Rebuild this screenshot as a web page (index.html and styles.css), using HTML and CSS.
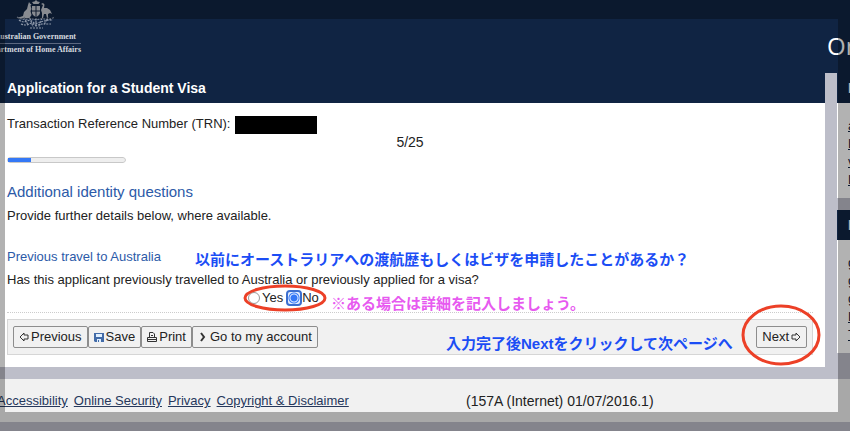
FILE: index.html
```html
<!DOCTYPE html>
<html lang="en">
<head>
<meta charset="utf-8">
<title>Application for a Student Visa</title>
<link rel="stylesheet" href="styles.css">
</head>
<body>
<header class="masthead">
  <div class="brand">
    <svg class="crest" viewBox="0 0 40 29" aria-hidden="true">
      <g fill="#c3c8d0">
        <path d="M20 0l1.500 1.500L24 2l-1.500 2H17.500L16 2l2.500-.5z"/>
        <path d="M13 2l1 1.500 1.500 1-1 1 1 3.500-1 2 1 4-2 3H9l-4 .5-4-.5 6-2 1-4 3-3 1-4z"/>
        <path d="M25 4l2-1 1.500 1.500L28 8l3 0 3 2 2 4-2-1-2 1v4h-1l-1-4-2 0-1 4h-1v-5l-1-3 2-5z"/>
        <path d="M16 6h8v6.500c0 2-2 3.500-4 4.500-2-1-4-2.500-4-4.500z"/>
      </g>
      <path d="M20 6v11M16 11h8" stroke="#142440" stroke-width="1"/>
      <g fill="none" stroke="#8d97a8" stroke-width="1.200" stroke-dasharray="2 1">
        <path d="M1 17q5 3 10 2t9 1q5-2 9-1t10-2M3 20q4 3 8 1t8 3q5-2 9-3t9-1M5 24q5 2 8 0t7 2q4-2 7-2t8 0M14 28h13"/>
        <path d="M8 17l4 8M14 18l3 9M20 18v9M26 18l-3 9M32 17l-4 8"/>
      </g>
    </svg>
    <span class="brand-top">Australian Government</span>
    <span class="brand-bottom">Department of Home Affairs</span>
  </div>
  <span class="site-name">On</span>
</header>
<div class="columns">
  <main class="main">
    <h1 class="title">Application for a Student Visa</h1>
    <div class="content">
      <p class="trn">Transaction Reference Number (TRN): <span class="redacted"></span></p>
      <p class="step">5/25</p>
      <progress class="progress" value="5" max="25" aria-label="Step 5 of 25"></progress>
      <h2 class="section">Additional identity questions</h2>
      <p class="line">Provide further details below, where available.</p>
      <h3 class="subsection">Previous travel to Australia
        <span class="note note-question" lang="ja">以前にオーストラリアへの渡航歴もしくはビザを申請したことがあるか？</span></h3>
      <fieldset class="question">
        <legend>Has this applicant previously travelled to Australia or previously applied for a visa?</legend>
        <div class="answers">
          <label class="choice"><input type="radio" name="travel">Yes</label>
          <label class="choice"><input type="radio" name="travel" checked>No</label>
          <svg class="ring ring-answer" viewBox="0 0 84 28" aria-hidden="true"><ellipse cx="42" cy="14" rx="40" ry="12"/></svg>
          <span class="note note-hint" lang="ja">※ある場合は詳細を記入しましょう。</span>
        </div>
      </fieldset>
      <div class="toolbar">
        <button type="button"><svg class="icon" viewBox="0 0 10 10"><path d="M1 5l4-4v2h4v4H5v2z"/></svg>Previous</button>
        <button type="button"><svg class="icon save" viewBox="0 0 10 10"><path class="disk" d="M0 1h10v9H1L0 9z"/><path class="paper" d="M2 2h6v3H2zM3 7h4v3H3z"/><path class="disk" d="M4 8h1v2H4z"/></svg>Save</button>
        <button type="button"><svg class="icon" viewBox="0 0 10 10"><path d="M2.500 5.500v-5h3.500l1.500 1.500v3.500M.5 5.500h9v4h-9zM.5 7.500h9M4 3.500h2"/></svg>Print</button>
        <button type="button"><svg class="icon bold" viewBox="0 0 10 10"><path d="M3 1l3 4-3 4"/></svg>Go to my account</button>
        <span class="note note-next" lang="ja">入力完了後Nextをクリックして次ページへ</span>
        <span class="next">
          <button type="button">Next<svg class="icon" viewBox="0 0 10 10"><path d="M9 5L5 1v2H1v4h4v2z"/></svg></button>
          <svg class="ring ring-next" viewBox="0 0 80 62" aria-hidden="true"><ellipse cx="40" cy="31" rx="38" ry="29"/></svg>
        </span>
      </div>
    </div>
  </main>
  <aside class="side">
    <h2 class="side-title">R</h2>
    <div class="side-box"><a href="#">a</a><a href="#">L</a><a href="#">v</a><a href="#">L</a></div>
    <h2 class="side-title">H</h2>
    <div class="side-box tall"><a href="#">g</a><a href="#">g</a><a href="#">g</a><a href="#">L</a><a href="#">T</a></div>
  </aside>
</div>
<footer class="footer">
  <nav class="links"><a href="#">Accessibility</a><a href="#">Online Security</a><a href="#">Privacy</a><a href="#">Copyright &amp; Disclaimer</a></nav>
  <span class="version">(157A (Internet) 01/07/2016.1)</span>
</footer>
<div class="shade"></div>
</body>
</html>
```
FILE: styles.css
```css
* { box-sizing: border-box; }
html { height: 100%; }
body {
  position: relative;
  min-height: 100%;
  margin: 0;
  overflow: hidden;
  background: #bdbec9;
  color: #222;
  font: 13px/20px "Liberation Sans", "Noto Sans CJK JP", sans-serif;
}
h1, h2, h3, p { margin: 0; }
.masthead {
  display: flex;
  justify-content: space-between;
  height: 73px;
  background: #102443;
  color: #fff;
}
.brand {
  display: flex;
  flex-direction: column;
  width: 81px;
  font: bold 8px/12px "Liberation Serif", serif;
  white-space: nowrap;
  color: #d5d9df;
}
.crest { width: 40px; height: 29px; margin: 0 0 2px 16px; }
.brand-top { align-self: flex-end; padding-right: 5px; }
.brand-bottom { align-self: flex-end; border-top: 1px solid #5c6880; }
.site-name {
  width: 23px;
  padding-top: 32px;
  font: 24px/28px "Open Sans", sans-serif;
}
.columns { display: flex; gap: 12px; }
.main { flex: 1; background: #fff; }
.title {
  padding: 5px 7px;
  background: #102443;
  color: #fff;
  font-size: 14px;
  line-height: 20px;
}
.content { padding: 11px 12px 12px 7px; }
.redacted {
  display: inline-block;
  width: 82px;
  height: 18px;
  margin-left: 1px;
  background: #000;
  vertical-align: middle;
}
.step { height: 18px; font-size: 14px; line-height: 16px; text-align: center; }
.progress {
  display: block;
  width: 119px;
  height: 6px;
  margin: 5px 0 18px;
  appearance: none;
  border-radius: 3px;
  overflow: hidden;
  border: 0;
}
.progress::-webkit-progress-bar {
  background: #eee;
  border: 1px solid #c8c8c8;
  border-radius: 3px;
}
.progress::-webkit-progress-value { background: #3478f6; }
.section { color: #2c5aa8; font-size: 15px; font-weight: normal; line-height: 22px; }
.line { padding: 3px 0; }
.subsection {
  position: relative;
  margin-top: 18px;
  color: #2c5aa8;
  font-size: 13px;
  font-weight: normal;
}
.note {
  position: absolute;
  color: #1b4df5;
  font-size: 15px;
  font-weight: bold;
  white-space: nowrap;
}
.note-question { left: 188px; top: 3px; }
.note-hint { left: 324px; top: 6px; color: #e75af0; }
.note-next { left: 438px; top: 14px; }
.question { margin: 0; padding: 0 0 6px; border: 0; border-bottom: 1px dotted #ccc; }
.question legend { padding: 3px 0 0; }
.answers { position: relative; display: flex; gap: 4px; height: 16px; padding-left: 240px; line-height: 16px; }
.choice { display: flex; align-items: center; gap: 1px; }
.choice input {
  width: 12px;
  height: 12px;
  margin: 1px;
  appearance: none;
  border: 1px solid #999;
  border-radius: 50%;
  background: #fff;
}
.choice input:checked {
  border: 0;
  border-radius: 2px;
  background: radial-gradient(circle, #3478f6 3px, #e4eeff 4px, #3478f6 5px, #e4eeff 6px);
  outline: 2px solid #3b6fd0;
}
.ring { position: absolute; fill: none; stroke: #ec4027; stroke-width: 3; }
.ring-answer { left: 236px; top: -6px; width: 84px; height: 28px; }
.ring-next { left: -15px; top: -22px; width: 80px; height: 62px; }
.toolbar {
  position: relative;
  display: flex;
  margin-top: 6px;
  padding: 6px 5px;
  border: 1px solid #d6d6d6;
  background: #f1f1f1;
}
button {
  display: flex;
  align-items: center;
  gap: 2px;
  height: 22px;
  padding: 0 5px;
  border: 1px solid #8d8d8d;
  border-radius: 2px;
  background: #f1f1f1;
  color: #222;
  font: inherit;
}
.icon { width: 10px; height: 10px; fill: none; stroke: #333; stroke-width: 1; }
.icon.bold { stroke-width: 2; }
.icon.save { stroke: none; }
.disk { fill: #426ba8; }
.paper { fill: #dfefff; }
.next { position: relative; margin-left: auto; }
.side { width: 13px; overflow: hidden; }
.side-title {
  height: 30px;
  padding-left: 11px;
  background: #102443;
  color: #fff;
  font-size: 14px;
  line-height: 30px;
}
.side-box { display: flex; flex-direction: column; height: 95px; margin-bottom: 12px; padding: 14px 0 0 11px; background: #fff; }
.side-box a { color: #102443; line-height: 18px; }
.side-box.tall { height: 113px; margin-bottom: 0; }
.footer {
  display: flex;
  height: 43px;
  margin-top: 12px;
  padding-top: 12px;
  background: #f1f1f1;
}
.links { display: flex; gap: 6px; width: 469px; margin-left: -3px; }
.links a { color: #26385c; }
.version { font-size: 14px; }
.shade {
  position: absolute;
  inset: 0;
  border: solid rgba(0, 0, 0, .3);
  border-width: 19px 12px 19px 5px;
  pointer-events: none;
}
```
